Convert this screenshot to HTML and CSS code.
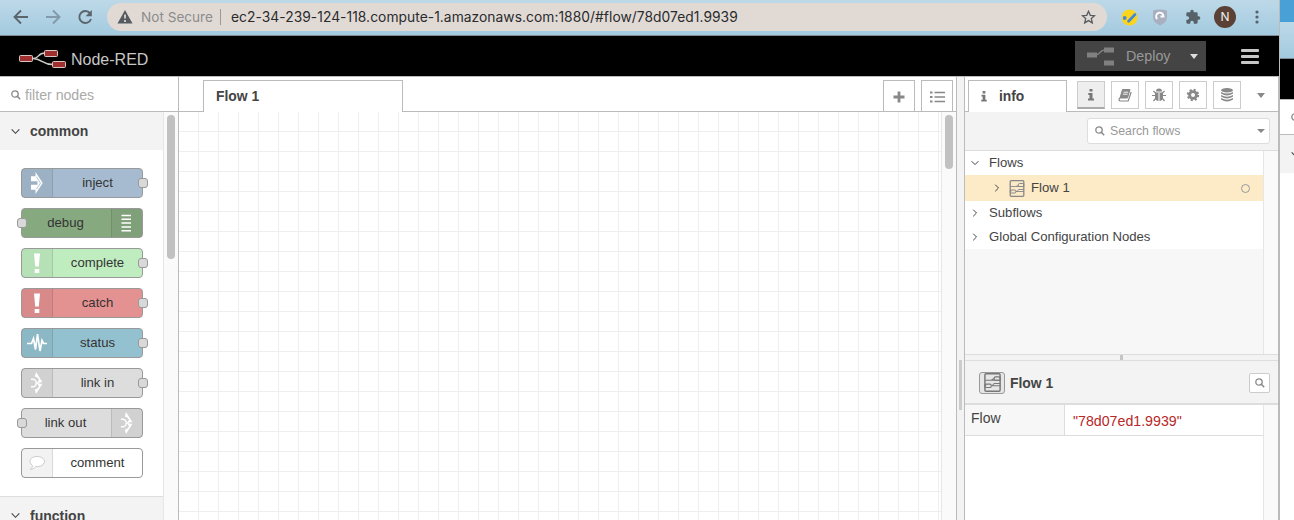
FILE: index.html
```html
<!DOCTYPE html>
<html lang="en">
<head>
<meta charset="utf-8">
<title>Node-RED</title>
<link rel="stylesheet" href="styles.css">
</head>
<body>
<svg class="defs" width="0" height="0">
  <symbol id="search" viewBox="0 0 10 10"><circle cx="4" cy="4" r="3.200" fill="none" stroke="currentColor" stroke-width="1.300"/><path d="M6.300 6.300L9.200 9.200" stroke="currentColor" stroke-width="1.500"/></symbol>
  <symbol id="down" viewBox="0 0 8 8"><path d="M.6 2.200L4 5.600L7.400 2.200" fill="none" stroke="currentColor" stroke-width="1"/></symbol>
  <symbol id="right" viewBox="0 0 8 8"><path d="M2.200 .7L5.500 4L2.200 7.300" fill="none" stroke="currentColor" stroke-width="1"/></symbol>
  <symbol id="info" viewBox="0 0 6 12"><path d="M1.500 0h3v2.600h-3zM.3 4h4.200v5.500H6V11.400H0V9.500h1.500V6H.3z" fill="currentColor"/></symbol>
  <symbol id="flow" viewBox="0 0 15 17"><rect x=".7" y=".7" width="13.600" height="15.600" rx="1" fill="none" stroke="currentColor" stroke-width="1.300"/><path d="M1 6.500h5c1.500 0 1.500-1.500 3-1.500M6 6.500h8.500M1 11h1M6.500 11.500h8M6.500 11.500c1.500 0 1.500-2 3-2h5" fill="none" stroke="currentColor" stroke-width=".9"/><rect x="9" y="3.500" width="5.300" height="3" rx="1" fill="none" stroke="currentColor"/><rect x=".8" y="10" width="5.500" height="3" rx="1" fill="none" stroke="currentColor"/></symbol>
  <symbol id="alert" viewBox="0 0 8 22"><path d="M1 1.500h6L5.800 14.500H2.200zM1.700 17h4.600v4H1.700z" fill="#fff"/></symbol>
  <symbol id="link" viewBox="0 0 14 24"><path d="M6 1L12.500 11.200H7.500L9 8.500Q7.500 6 4.800 5.500zM6 23L12.500 12.800H7.500L9 15.500Q7.500 18 4.800 18.500z" fill="#fff"/><path d="M1 8.200h1.500a3.800 3.800 0 0 1 0 7.600H1M6.500 12h3" fill="none" stroke="#fff" stroke-width="1.400"/></symbol>
</svg>
<div class="screen">
  <div class="window">
    <div class="chrome">
      <svg class="nav" width="84" height="18" viewBox="0 0 84 18" fill="none" stroke-width="1.900"><path d="M16 9H3M9 2.500L2.500 9L9 15.500" stroke="#5b656d"/><path d="M34 9h13M41 2.500L47.500 9L41 15.500" stroke="#8199a9"/><path d="M78 5.200A6 6 0 1 0 79 11" stroke="#5b656d"/><path d="M79.800 2v6.200h-6.200z" fill="#5b656d"/></svg>
      <div class="address">
        <svg width="16" height="14" viewBox="0 0 16 14"><path d="M8 0L15.500 13.500H.5z" fill="#555a60"/><path d="M8 4.500v4M8 10v2" stroke="#e1dad4" stroke-width="1.700"/></svg>
        <span class="insecure">Not Secure</span><i class="bar"></i>
        <span class="url">ec2-34-239-124-118.compute-1.amazonaws.com:1880/#flow/78d07ed1.9939</span>
        <svg class="star" width="15" height="15" viewBox="0 0 15 15"><path d="M7.500 1.300l1.800 4 4.300.4-3.300 2.900 1 4.300-3.800-2.300-3.800 2.300 1-4.300L1.400 5.700l4.300-.4z" fill="none" stroke="#555a60" stroke-width="1.300"/></svg>
      </div>
      <svg class="check" width="17" height="17" viewBox="0 0 17 17"><circle cx="8.500" cy="8.500" r="8" fill="#fbd51c"/><circle cx="3.700" cy="9" r="1.900" fill="#4687d8"/><path d="M7.500 12.300L14 5.500" stroke="#4687d8" stroke-width="2.700" stroke-linecap="round"/></svg>
      <svg class="shield" width="14" height="17" viewBox="0 0 14 17"><path d="M0 1.500Q7-.5 14 1.500V8Q14 13.500 7 16.500Q0 13.500 0 8z" fill="#a8b0bf"/><path d="M4.200 10A3.700 3.700 0 1 1 10.500 7.500H7.500" stroke="#fff" stroke-width="1.900" fill="none"/></svg>
      <svg class="puzzle" width="16" height="16" viewBox="0 0 24 24"><path d="M20.500 11H19V7a2 2 0 0 0-2-2h-4V3.500a2.500 2.500 0 0 0-5 0V5H4a2 2 0 0 0-2 2v3.800h1.500a2.700 2.700 0 0 1 0 5.400H2V20a2 2 0 0 0 2 2h3.800v-1.500a2.700 2.700 0 0 1 5.400 0V22H17a2 2 0 0 0 2-2v-4h1.500a2.500 2.500 0 0 0 0-5z" fill="#56616a"/></svg>
      <span class="avatar">N</span>
      <svg class="dots" width="4" height="14" viewBox="0 0 4 14" fill="#56616a"><circle cx="2" cy="2" r="1.600"/><circle cx="2" cy="7" r="1.600"/><circle cx="2" cy="12" r="1.600"/></svg>
    </div>
    <header class="header">
      <svg class="logo" width="48" height="20" viewBox="0 0 48 20"><path d="M14 9.500c7 0 4-5.500 12-5.500M14 9.500c9 0 9 6 20 6" fill="none" stroke="#ccc" stroke-width="1.500"/><g fill="#a0302f" stroke="#d8c8c5"><rect x=".5" y="6.500" width="13" height="6" rx="1"/><rect x="25.500" y="1.500" width="13" height="6" rx="1"/><rect x="33.500" y="12.500" width="13" height="6" rx="1"/></g></svg>
      <span class="brand">Node-RED</span>
      <div class="deploy"><svg width="28" height="20" viewBox="0 0 28 20"><path d="M8 8c6 0 4-5 10-5" fill="none" stroke="#808080" stroke-width="1.500"/><path d="M0 5.500h10v5H0zM17 .5h10v5H17zM17 13.500h10v5H17z" fill="#808080"/></svg><span>Deploy</span><i class="caret light"></i></div>
      <div class="menu"><i></i><i></i><i></i></div>
    </header>
    <main class="editor">
      <aside class="palette">
        <div class="filter"><svg width="10" height="10"><use href="#search"/></svg><span>filter nodes</span></div>
        <div class="palette-body">
          <div class="categories">
            <div class="category"><svg width="9" height="9"><use href="#down"/></svg><b>common</b></div>
            <div class="nodes">
              <div class="node inject"><i class="icon"><svg width="14" height="24" viewBox="0 0 14 24"><path d="M1 5.200h4.500V1L12.700 12L5.500 23v-4.200H1v-5h6.500V10.200H1z" fill="#fff"/><path d="M6.300 5.800l4.200 6.200-4.200 6.200" stroke="#9fb3c9" stroke-width=".8" fill="none"/></svg></i><span>inject</span><i class="port out"></i></div>
              <div class="node debug flip"><i class="icon"><svg width="11" height="18" viewBox="0 0 11 18"><path d="M.5 1.500h9.500M.5 5.300h9.500M.5 9.100h9.500M.5 12.900h9.500M.5 16.700h9.500" stroke="#fff" stroke-width="1.500"/></svg></i><span>debug</span><i class="port in"></i></div>
              <div class="node complete"><i class="icon"><svg width="8" height="22"><use href="#alert"/></svg></i><span>complete</span><i class="port out"></i></div>
              <div class="node catch"><i class="icon"><svg width="8" height="22"><use href="#alert"/></svg></i><span>catch</span><i class="port out"></i></div>
              <div class="node status"><i class="icon"><svg width="20" height="24" viewBox="0 0 20 24"><path d="M0 12.500h4.500l2-5 2 11L10.500 3l2.500 17 2-10.500 1.500 3H20" fill="none" stroke="#fff" stroke-width="1.700"/></svg></i><span>status</span><i class="port out"></i></div>
              <div class="node link"><i class="icon"><svg width="14" height="24"><use href="#link"/></svg></i><span>link in</span><i class="port out"></i></div>
              <div class="node link flip"><i class="icon"><svg width="14" height="24"><use href="#link"/></svg></i><span>link out</span><i class="port in"></i></div>
              <div class="node comment"><i class="icon"><svg width="18" height="16" viewBox="0 0 18 16"><path d="M4.500 10.500C-.5 7 2 1.500 9 1.500s10 5.500 5 8.800c-2 1.300-4.500 1.400-6.300 1.100C6.500 13.500 4 14.500 2 14.500c1.500-1 2.500-2.200 2.500-4z" fill="#fff" stroke="#ccc"/></svg></i><span>comment</span></div>
            </div>
            <div class="category second"><svg width="9" height="9"><use href="#down"/></svg><b>function</b></div>
          </div>
          <div class="track"><i class="thumb tall"></i></div>
        </div>
      </aside>
      <section class="workspace">
        <div class="tabs">
          <div class="tab">Flow 1</div>
          <div class="tool"><svg width="12" height="12" viewBox="0 0 12 12"><path d="M6 .5v11M.5 6h11" stroke="#888" stroke-width="2.800"/></svg></div>
          <div class="tool"><svg width="15" height="12" viewBox="0 0 15 12"><path d="M0 1.500h2.500M0 6h2.500M0 10.500h2.500" stroke="#888" stroke-width="2.200"/><path d="M4.500 1.500H15M4.500 6H15M4.500 10.500H15" stroke="#888" stroke-width="1.500"/></svg></div>
        </div>
        <div class="canvas-row"><div class="canvas"></div><div class="track"><i class="thumb"></i></div></div>
      </section>
      <div class="separator"><i></i></div>
      <aside class="sidebar">
        <div class="side-tabs">
          <div class="side-tab"><svg width="6" height="11"><use href="#info"/></svg><b>info</b></div>
          <div class="btn active"><svg width="6" height="12"><use href="#info"/></svg></div>
          <div class="btn"><svg width="14" height="13" viewBox="0 0 14 13"><path d="M4.500 .5H12L9.500 9H2z" fill="#888" stroke="#888" stroke-linejoin="round"/><path d="M2 9C.3 10.500 1 12 2.300 12h7.900L13.200 3" fill="none" stroke="#888" stroke-width="1.200"/><path d="M5.500 3.200h4.700M4.900 5.200h4.700" stroke="#fff" stroke-width=".9"/></svg></div>
          <div class="btn"><svg width="14" height="14" viewBox="0 0 14 14"><path d="M4 3.500a3 3 0 0 1 6 0zM3 4.500h8V9a4 4 0 0 1-8 0z" fill="#888"/><path d="M0 7.500h14M1.500 3l2.500 2.500M12.500 3L10 5.500M1.500 13L4 10M12.500 13L10 10" stroke="#888" stroke-width="1.200"/><path d="M7 5v8" stroke="#fff"/></svg></div>
          <div class="btn"><svg width="14" height="14" viewBox="0 0 14 14"><circle cx="7" cy="7" r="3.400" fill="none" stroke="#888" stroke-width="2.800"/><circle cx="7" cy="7" r="5.200" fill="none" stroke="#888" stroke-width="2" stroke-dasharray="2.100 1.984"/></svg></div>
          <div class="btn"><svg width="14" height="14" viewBox="0 0 14 14" fill="#888"><ellipse cx="7" cy="2.300" rx="6" ry="2.200"/><path d="M1 4q6 3 12 0v1.500q-6 4-12 0zM1 7q6 3.500 12 0v1.500q-6 4-12 0zM1 10q6 3.500 12 0v1.500q-6 4-12 0z"/></svg></div>
          <i class="caret"></i>
        </div>
        <div class="side-search"><div class="box"><svg width="10" height="10"><use href="#search"/></svg><span>Search flows</span><i class="caret small"></i></div></div>
        <div class="outline">
          <div class="tree">
            <div class="row"><svg width="8" height="8"><use href="#down"/></svg><span>Flows</span></div>
            <div class="row selected"><svg width="8" height="8"><use href="#right"/></svg><svg class="flow-icon" width="16" height="17"><use href="#flow"/></svg><span>Flow 1</span><i class="ring"></i></div>
            <div class="row"><svg width="8" height="8"><use href="#right"/></svg><span>Subflows</span></div>
            <div class="row last"><svg width="8" height="8"><use href="#right"/></svg><span>Global Configuration Nodes</span></div>
          </div>
          <div class="track"></div>
        </div>
        <div class="splitter"><i></i></div>
        <div class="detail-head"><div class="chip"><svg width="17" height="19"><use href="#flow"/></svg></div><b>Flow 1</b><div class="find"><svg width="10" height="10"><use href="#search"/></svg></div></div>
        <div class="detail-body"><div class="props"><div class="prop"><span class="key">Flow</span><span class="value">"78d07ed1.9939"</span></div></div><div class="track"></div></div>
      </aside>
    </main>
  </div>
  <div class="behind">
    <div class="b-title"></div><div class="b-chrome"></div><div class="b-header"></div>
    <div class="b-filter"><svg width="10" height="10"><use href="#search"/></svg></div>
    <div class="b-category"><svg width="9" height="9"><use href="#down"/></svg></div>
  </div>
</div>
</body>
</html>
```

FILE: styles.css
```css
* { box-sizing: border-box; }
body { margin: 0; font: 13px/20px "Liberation Sans", Arial, sans-serif; color: #444; background: #fff; }
svg { flex: none; display: block; }
.defs { position: absolute; }
.screen { display: flex; width: 1294px; height: 520px; overflow: hidden; }
.window { width: 1279px; display: flex; flex-direction: column; flex: none; }
.chrome { height: 36px; border-bottom: 1px solid #7e8990; background: linear-gradient(#bdd9e8, #a3cadf); display: flex; align-items: center; padding-bottom: 1px; flex: none; }
.nav { margin-left: 12px; }
.address { width: 1000px; height: 28px; border-radius: 14px; margin-left: 11px; background: #e1dad4; display: flex; align-items: center; padding-left: 10px; font: 14px/20px Inter, sans-serif; color: #292b2e; }
.insecure { width: 72px; margin-left: 8px; color: #8b8c8e; font-size: 13.600px; white-space: nowrap; }
.bar { width: 1px; height: 16px; background: #999; margin-left: 7px; }
.url { margin-left: 10px; white-space: nowrap; font-size: 13.800px; letter-spacing: .05px; }
.star { margin-left: auto; margin-right: 11px; }
.check { margin-left: 14px; }
.shield { margin-left: 15px; }
.puzzle { margin-left: 18px; }
.avatar { width: 22px; height: 22px; border-radius: 50%; background: #5b4036; color: #eee; text-align: center; font: 12px/22px Inter, sans-serif; margin-left: 13px; }
.dots { margin-left: 19px; }
.header { height: 40px; background: #000; display: flex; align-items: center; padding-left: 19px; flex: none; }
.logo { margin-top: 5px; }
.brand { margin: 7px 0 0 4px; font-size: 16px; color: #c7c7c7; }
.deploy { width: 131px; height: 30px; background: #444; margin-left: auto; display: flex; align-items: center; padding-left: 12px; color: #999; font-size: 14.300px; }
.deploy svg { margin-top: 2px; }
.deploy span { margin-left: 11px; }
.caret { border: 5px solid transparent; border-top-color: #888; border-bottom: 0; }
.deploy .caret { margin-left: auto; margin-right: 8px; border-width: 5px 4.500px 0; border-top-color: #ddd; }
.menu { margin: 0 20px 0 35px; display: grid; gap: 3px; }
.menu i { width: 18px; height: 3px; border-radius: 1px; background: #c7c7c7; }
.editor { flex: 1; min-height: 0; display: flex; border-top: 1px solid #bbb; border-right: 1px solid #bbb; }
.palette { width: 179px; border-right: 1px solid #bbb; display: flex; flex-direction: column; flex: none; }
.filter { height: 35px; flex: none; border-bottom: 1px solid #bbb; display: flex; align-items: center; gap: 4px; padding: 2px 0 0 11px; color: #aaa; font-size: 14.150px; }
.filter svg, .box svg, .find svg { color: #888; }
.palette-body { flex: 1; min-height: 0; display: flex; }
.categories { width: 163px; overflow: hidden; }
.category { height: 38px; background: #f3f3f3; display: flex; align-items: center; padding-left: 11px; gap: 10px; font-size: 14px; }
.category b { font-size: 14px; }
.category.second { border-top: 1px solid #ddd; }
.track { width: 15px; flex: none; border-left: 1px solid #e6e6e6; background: #fafafa; padding: 3px 0 0 3px; }
.thumb { display: block; width: 8px; height: 54px; border-radius: 4px; background: #c1c1c1; }
.thumb.tall { height: 144px; }
.nodes { padding: 18px 20px 18px 21px; display: grid; gap: 10px; }
.node { width: 122px; height: 30px; border: 1px solid #999; border-radius: 4px; position: relative; display: flex; color: #333; font-size: 13.150px; line-height: 28px; }
.node .icon { width: 31px; background: rgba(0,0,0,.05); border-right: 1px solid rgba(0,0,0,.1); display: flex; align-items: center; justify-content: center; }
.node .icon svg { margin-right: 1px; }
.node span { flex: 1; text-align: center; }
.node.flip { flex-direction: row-reverse; }
.node.flip span { padding-right: 2px; }
.flip .icon { border-right: 0; border-left: 1px solid rgba(0,0,0,.1); }
.inject { background: #a6bbcf; } .debug { background: #87a980; } .complete { background: #c0edc0; }
.catch { background: #e49191; } .status { background: #94c1d0; } .link { background: #ddd; } .comment { background: #fff; }
.port { position: absolute; top: 9px; width: 10px; height: 10px; border: 1px solid #999; border-radius: 3px; background: #d9d9d9; }
.port.out { right: -6px; } .port.in { left: -5px; }
.workspace { width: 778px; flex: none; border-right: 1px solid #bbb; display: flex; flex-direction: column; }
.tabs { height: 35px; flex: none; display: flex; align-items: flex-end; padding: 0 3px 0 24px; gap: 6px; box-shadow: inset 0 -1px #bbb; }
.tab { width: 200px; height: 32px; border: 1px solid #bbb; border-bottom: 0; background: #fff; padding: 5px 12px; font-weight: bold; font-size: 13.900px; margin-right: auto; }
.tool { width: 32px; height: 32px; border: 1px solid #bbb; display: flex; align-items: center; justify-content: center; padding-top: 1px; }
.canvas-row { flex: 1; display: flex; }
.canvas { flex: 1; background: linear-gradient(90deg, transparent 19px, #eee 19px) 0 0 / 20px 20px, linear-gradient(transparent 19px, #eee 19px) 0 0 / 20px 20px; }
.separator { width: 7px; background: #f3f3f3; padding: 283px 0 0 2px; flex: none; }
.separator i { display: block; width: 3px; height: 50px; background: #ccc; }
.sidebar { width: 314px; border-left: 1px solid #bbb; flex: none; display: flex; flex-direction: column; }
.side-tabs { height: 35px; flex: none; display: flex; align-items: flex-start; padding: 3px 0 0 3px; gap: 6px; box-shadow: inset 0 -1px #bbb; }
.side-tab { width: 99px; height: 32px; background: #fff; border: 1px solid #bbb; border-bottom: 0; display: flex; align-items: center; padding-left: 12px; gap: 12px; font-size: 13.800px; color: #444; margin-right: 4px; }
.side-tab svg, .btn { color: #777; }
.btn { width: 28px; height: 28px; margin-top: 1px; border: 1px solid #ccc; display: flex; align-items: center; justify-content: center; }
.btn.active { background: #eee; border-bottom: 2px solid #aaa; }
.side-tabs .caret { border-width: 5px 4.500px 0; margin: 13px 0 0 10px; }
.side-search { height: 39px; flex: none; background: #f3f3f3; border-bottom: 1px solid #ddd; display: flex; padding: 6px 8px 0; justify-content: flex-end; }
.box { width: 183px; height: 26px; border: 1px solid #ddd; border-radius: 3px; background: #fff; display: flex; align-items: center; padding: 0 4px 0 7px; font-size: 12.300px; color: #999; gap: 5px; }
.caret.small { border-width: 4px 4px 0; margin-left: auto; }
.outline { height: 203px; flex: none; display: flex; background: #f7f7f7; }
.tree { width: 298px; font-size: 13.150px; }
.row { height: 24px; background: #fff; display: flex; align-items: center; padding-left: 6px; gap: 10px; }
.row.selected { height: 26px; background: #fdeac7; padding-left: 28px; }
.row .flow-icon { color: #888; margin-left: -2px; }
.flow-icon + span { margin-left: -4px; }
.ring { width: 9px; height: 9px; border: 1px solid #999; border-radius: 50%; margin: 1px 13px 0 auto; }
.splitter { height: 7px; flex: none; background: #f3f3f3; border: 1px solid #ddd; border-width: 1px 0; display: flex; justify-content: center; }
.splitter i { width: 3px; height: 5px; background: #c5c5c5; }
.detail-head { height: 44px; flex: none; background: #f3f3f3; border-bottom: 2px solid #ddd; display: flex; align-items: center; padding: 1px 8px 0 14px; font-size: 14px; gap: 5px; }
.detail-head b { font-size: 13.900px; }
.chip { width: 26px; height: 22px; border: 1px solid #999; border-radius: 3px; background: #e6e6e6; display: flex; align-items: center; justify-content: center; color: #777; }
.find { width: 21px; height: 20px; border: 1px solid #ccc; background: #fff; display: flex; align-items: center; justify-content: center; margin-left: auto; border-radius: 2px; }
.detail-body { flex: 1; display: flex; }
.props { width: 298px; }
.prop { height: 31px; border-bottom: 1px solid #ddd; display: flex; }
.key { width: 100px; background: #f7f7f7; border-right: 1px solid #ddd; padding: 3px 6px; font-size: 14px; }
.value { padding: 6px 8px; color: #b72828; font-size: 14.200px; }
.behind { width: 15px; border-left: 1px solid #bbb; overflow: hidden; }
.b-title { height: 22px; background: #49a0d7; }
.b-chrome { height: 37px; background: linear-gradient(#bdd9e8, #a3cadf); border-bottom: 1px solid #7e8990; }
.b-header { height: 40px; background: #000; }
.b-filter { height: 36px; border: 1px solid #bbb; border-width: 1px 0; padding: 13px 0 0 11px; color: #888; }
.b-category { height: 38px; background: #f3f3f3; padding: 15px 0 0 11px; }
```
